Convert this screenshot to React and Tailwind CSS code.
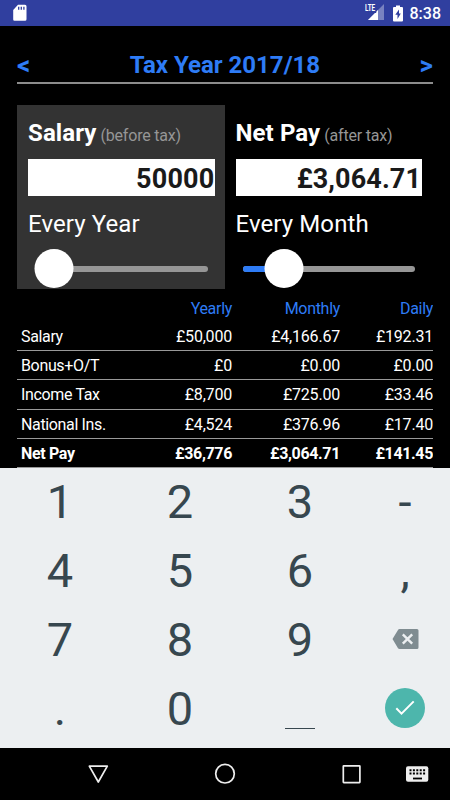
import React, { useState } from 'react';

const rows = [
  { label: 'Salary', yearly: '£50,000', monthly: '£4,166.67', daily: '£192.31' },
  { label: 'Bonus+O/T', yearly: '£0', monthly: '£0.00', daily: '£0.00' },
  { label: 'Income Tax', yearly: '£8,700', monthly: '£725.00', daily: '£33.46' },
  { label: 'National Ins.', yearly: '£4,524', monthly: '£376.96', daily: '£17.40' },
  { label: 'Net Pay', yearly: '£36,776', monthly: '£3,064.71', daily: '£141.45', bold: true },
];

const keys = ['1', '2', '3', '-', '4', '5', '6', ',', '7', '8', '9', 'del', '.', '0', 'space', 'ok'];

const StatusBar = () => (
  <div className="flex h-[26px] items-center bg-[#303f9f] pl-[13px] pr-[9px] text-white">
    <svg width="14" height="18" viewBox="0 0 14 18">
      <path d="M5 0.7h7a1.5 1.5 0 0 1 1.5 1.5v13a1.5 1.5 0 0 1-1.5 1.5H1.5A1.3 1.3 0 0 1 0.2 15.4V6z" fill="#fff" />
      <path d="M5.7 2.7v3M8.3 2.7v3M10.9 2.7v3" stroke="#303f9f" strokeWidth="1.3" />
    </svg>
    <div className="ml-auto flex items-center">
      <div className="relative mr-[9px] h-[18px] w-[20px]">
        <svg className="absolute bottom-0.5 right-0" width="16" height="16" viewBox="0 0 16 16">
          <path d="M16 0v16H0z" fill="#fff" opacity="0.35" />
          <path d="M10 6v10H0z" fill="#fff" />
        </svg>
        <span className="absolute left-px top-0 origin-top-left scale-x-[0.7] bg-[#303f9f] pr-px text-[9px] font-bold leading-[9px]">LTE</span>
      </div>
      <svg className="mr-[7px]" width="10" height="17" viewBox="0 0 10 17">
        <path d="M3 0.5h4V2h2a1 1 0 0 1 1 1v12.5a1 1 0 0 1-1 1H1a1 1 0 0 1-1-1V3a1 1 0 0 1 1-1h2z" fill="#fff" />
        <path d="M6 4.5L2.300 9.800h2.200v4.200L7.800 8.600H6z" fill="#303f9f" />
      </svg>
      <span className="pt-px text-[16px] font-medium leading-none">8:38</span>
    </div>
  </div>
);

const Slider = ({ value }) => (
  <div className="relative ml-[7px] mr-[7px] mt-[11px] h-[39px]">
    <div className="absolute inset-x-0 top-[17px] h-[6px] overflow-hidden rounded-full bg-[#969696]">
      <div className="h-full bg-[#2e7cf6]" style={{ width: value }} />
    </div>
    <div className="absolute top-0 size-[39px] -translate-x-1/2 rounded-full bg-white" style={{ left: value }} />
  </div>
);

const PayPanel = ({ title, note, value, period, position, active }) => (
  <div className={active ? 'h-[184px] w-[208px] bg-[#333] pl-[11px] pr-[10.500px]' : 'h-[184px] w-[208px] pl-[10.500px] pr-[11px]'}>
    <div className="h-[54px] whitespace-nowrap pt-[14px] leading-[28px]">
      <span className="text-[24px] font-bold tracking-[0.1px] text-white">{title}</span>
      <span className="ml-1 text-[16px] tracking-[-0.2px] text-[#969696]">{note}</span>
    </div>
    <div
      className={
        active
          ? 'h-[37px] bg-white text-right text-[27px] font-bold leading-[40px] tracking-[0.2px] text-[#1a1a1a]'
          : 'h-[37px] bg-white pr-px text-right text-[27px] font-bold leading-[40px] tracking-[0.1px] text-[#1a1a1a]'
      }
    >
      {value}
    </div>
    <div className="mt-[14px] text-[24px] leading-[28px] tracking-[0.1px] text-white">{period}</div>
    <Slider value={position} />
  </div>
);

const Key = ({ name }) => {
  if (name === 'del') {
    return (
      <svg className="-mt-0.5" width="27" height="20" viewBox="0 0 27 20">
        <path d="M7.5 0H25a1.5 1.5 0 0 1 1.5 1.5v17A1.5 1.5 0 0 1 25 20H7.5a2 2 0 0 1-1.5-.8L.5 10 6 .9A2 2 0 0 1 7.500 0z" fill="#7f8c91" />
        <path d="M10.800 5.300l9.400 9.400M20.200 5.300l-9.400 9.400" stroke="#eceff1" strokeWidth="2.400" />
      </svg>
    );
  }
  if (name === 'ok') {
    return (
      <div className="-mt-0.5 flex size-10 items-center justify-center rounded-full bg-[#4db6ac]">
        <svg width="20" height="16" viewBox="0 0 20 16" fill="none" stroke="#fff" strokeWidth="2">
          <path d="M1.3 8.3l5.2 5.3L18.7 1.4" />
        </svg>
      </div>
    );
  }
  if (name === 'space') {
    return <div className="mt-10 h-[1.5px] w-[30px] bg-[#37474f]" />;
  }
  return <span>{name}</span>;
};

const NavBar = () => (
  <div className="flex h-[52px] items-center bg-black text-[#eee]">
    <svg width="450" height="52" viewBox="0 0 450 52" fill="none" stroke="currentColor" strokeWidth="1.7" strokeLinejoin="round">
      <path d="M89.3 18.2h18L98.3 34z" />
      <circle cx="225" cy="25.7" r="9.3" />
      <rect x="343.3" y="17.8" width="16.6" height="16.8" rx="0.5" />
      <rect x="406" y="18.2" width="22.3" height="15.5" rx="2" fill="currentColor" stroke="none" />
      <path d="M409.5 22.2h16M409.5 25.6h16" stroke="#000" strokeWidth="2" strokeDasharray="2 1.4" />
      <path d="M413 30.5h9" stroke="#000" strokeWidth="1.8" />
    </svg>
  </div>
);

const App = () => {
  const [position] = useState({ salary: '19px', net: '41.5px' });

  return (
    <div className="flex h-[800px] w-[450px] flex-col overflow-hidden bg-black font-['Roboto',sans-serif]">
      <StatusBar />
      <div className="mx-[17px] mt-[22px] flex h-[36px] items-center justify-between border-b-2 border-[#8c8c8c] text-[24px] font-bold leading-none text-[#2e7cf6]">
        <span className="text-[26px]">&lt;</span>
        <span>Tax Year 2017/18</span>
        <span className="text-[26px]">&gt;</span>
      </div>

      <div className="mx-[17px] mt-[21px] flex">
        <PayPanel title="Salary" note="(before tax)" value="50000" period="Every Year" position={position.salary} active />
        <PayPanel title="Net Pay" note="(after tax)" value="£3,064.71" period="Every Month" position={position.net} />
      </div>

      <div className="mx-[17px] h-[179px] overflow-hidden text-[16px] text-white">
        <div className="grid h-[33px] grid-cols-[107px_108px_108px_93px] pt-[8px] text-right leading-[24px] tracking-[-0.3px] text-[#2e7cf6]">
          <span />
          <span>Yearly</span>
          <span>Monthly</span>
          <span>Daily</span>
        </div>
        {rows.map((row) => (
          <div
            key={row.label}
            className={
              row.bold
                ? 'grid h-[29.2px] grid-cols-[107px_108px_108px_93px] border-b border-[#999] text-right font-bold leading-[29px] tracking-[-0.35px]'
                : 'grid h-[29.2px] grid-cols-[107px_108px_108px_93px] border-b border-[#999] text-right leading-[29px] tracking-[-0.2px]'
            }
          >
            <span className="pl-1 text-left tracking-[-0.35px]">{row.label}</span>
            <span>{row.yearly}</span>
            <span>{row.monthly}</span>
            <span>{row.daily}</span>
          </div>
        ))}
      </div>

      <div className="h-[280px] bg-[#eceff1]">
        <div className="-mt-px grid grid-cols-[120px_120px_120px_90px] grid-rows-[69px_69px_69px_69px] text-[47px] leading-none text-[#37474f]">
          {keys.map((key) => (
            <div key={key} className="flex items-center justify-center">
              <Key name={key} />
            </div>
          ))}
        </div>
      </div>
      <NavBar />
    </div>
  );
};

export default App;
